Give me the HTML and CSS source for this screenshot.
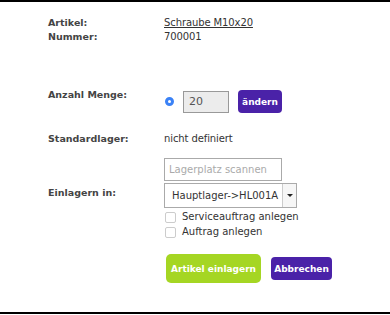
FILE: index.html
```html
<!DOCTYPE html>
<html>
<head>
  <title>Artikel einlagern</title>
  <link rel="stylesheet" href="styles.css">
</head>
<body>
  <div class="panel">
    <div class="row info">
      <div class="label">Artikel:</div>
      <div class="value"><a href="#">Schraube M10x20</a></div>
      <div class="label">Nummer:</div>
      <div class="value">700001</div>
    </div>

    <div class="row menge">
      <div class="label">Anzahl Menge:</div>
      <div class="controls">
        <span class="radio"></span>
        <input class="qty" type="text" value="20" readonly>
        <button class="btn btn-purple btn-small">ändern</button>
      </div>
    </div>

    <div class="row lager">
      <div class="label">Standardlager:</div>
      <div class="value">nicht definiert</div>
    </div>

    <div class="row einlagern">
      <div class="label">Einlagern in:</div>
      <div class="stack">
        <input class="scan" type="text" placeholder="Lagerplatz scannen">
        <div class="select-wrap">
          <select class="select">
            <option>Hauptlager-&gt;HL001A</option>
          </select>
          <span class="arrow"></span>
        </div>
        <label class="check"><span class="box"></span>Serviceauftrag anlegen</label>
        <label class="check"><span class="box"></span>Auftrag anlegen</label>
      </div>
    </div>

    <div class="row actions">
      <div class="label"></div>
      <div class="buttons">
        <button class="btn btn-green">Artikel einlagern</button>
        <button class="btn btn-purple">Abbrechen</button>
      </div>
    </div>
  </div>
</body>
</html>
```

FILE: styles.css
```css
body {
  margin: 0;
  font-family: "DejaVu Sans", Verdana, sans-serif;
  font-size: 10px;
  line-height: 14px;
  color: #333;
  background-color: #fff;
}
.panel {
  border-top: 2px solid #000;
  border-bottom: 2px solid #000;
  height: 314px;
  padding: 14px 0 0 48px;
  box-sizing: border-box;
}
.row {
  display: grid;
  grid-template-columns: 116px auto;
  align-items: start;
}
.label {
  font-weight: bold;
  font-size: 9.5px;
  color: #444;
}
.value {
  letter-spacing: -0.1px;
}
.value a {
  color: #333;
}
.menge {
  margin-top: 43px;
}
.menge .label {
  margin-top: 1px;
}
.controls {
  display: flex;
  align-items: center;
  margin-top: 3px;
}
.radio {
  width: 3px;
  height: 3px;
  border: 3px solid #3b82f6;
  border-radius: 50%;
  background-color: #fff;
  margin: 0 9px 0 1px;
}
.qty {
  width: 46px;
  height: 22px;
  box-sizing: border-box;
  border: 1px solid #999;
  background-color: #ececec;
  color: #555;
  font-family: inherit;
  font-size: 11px;
  padding: 0 5px;
  margin: 0;
}
.btn {
  border: none;
  color: #fff;
  font-family: inherit;
  font-weight: bold;
  font-size: 9px;
  white-space: nowrap;
  border-radius: 4px;
  cursor: pointer;
  padding: 0;
}
.btn-purple {
  background-color: #4a22a8;
}
.btn-green {
  background-color: #a5d623;
}
.btn-small {
  width: 44px;
  height: 23px;
  margin-left: 9px;
}
.lager {
  margin-top: 19px;
}
.einlagern {
  margin-top: 12px;
}
.einlagern .label {
  margin-top: 28px;
}
.stack {
  display: flex;
  flex-direction: column;
  align-items: flex-start;
}
.scan {
  width: 118px;
  height: 23px;
  box-sizing: border-box;
  border: 1px solid #aaa;
  font-family: inherit;
  font-size: 10px;
  padding: 0 4px;
  margin: 0;
}
.scan::placeholder {
  color: #aaa;
}
.select-wrap {
  position: relative;
  margin-top: 2px;
}
.select {
  appearance: none;
  -webkit-appearance: none;
  width: 133px;
  height: 25px;
  box-sizing: border-box;
  border: 1px solid #aaa;
  border-radius: 0;
  background-color: #fff;
  color: #333;
  font-family: inherit;
  font-size: 10px;
  padding: 0 0 0 7px;
  margin: 0;
}
.arrow {
  position: absolute;
  right: 1px;
  top: 1px;
  bottom: 1px;
  width: 13px;
  border-left: 1px solid #ccc;
  background-color: #f6f6f6;
}
.arrow::after {
  content: "";
  position: absolute;
  left: 4px;
  top: 10px;
  border-left: 3px solid transparent;
  border-right: 3px solid transparent;
  border-top: 3px solid #222;
}
.check {
  display: flex;
  align-items: center;
  margin-top: 2px;
  height: 14px;
}
.check + .check {
  margin-top: 1px;
}
.box {
  width: 9px;
  height: 9px;
  border: 1px solid #ccc;
  border-radius: 2px;
  margin: 0 6px 0 1px;
}
.actions {
  margin-top: 15px;
}
.buttons {
  display: flex;
  align-items: center;
  gap: 10px;
  padding-left: 2px;
}
.buttons .btn-green {
  width: 95px;
  height: 29px;
  border-radius: 5px;
}
.buttons .btn-purple {
  width: 61px;
  height: 23px;
}
```
